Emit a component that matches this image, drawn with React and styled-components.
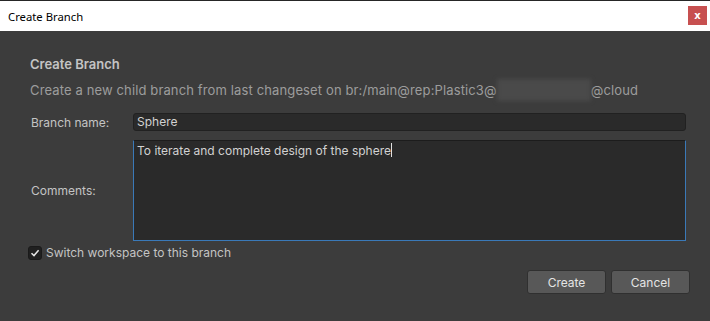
import React from 'react';
import styled, { createGlobalStyle } from 'styled-components';

const GlobalStyle = createGlobalStyle`
  html, body {
    margin: 0;
    padding: 0;
    background: #3c3c3c;
  }
  * { box-sizing: border-box; }
`;

// Window chrome
const Window = styled.div`
  width: 710px;
  height: 321px;
  display: flex;
  flex-direction: column;
  border-top: 1px solid #262626;
  background: #3c3c3c;
  font-family: Inter, "Noto Sans", sans-serif;
`;

const TitleBar = styled.div`
  height: 30px;
  background: #ffffff;
  display: flex;
  align-items: center;
  justify-content: space-between;
  padding: 0 3px 0 8px;
`;

const TitleText = styled.span`
  font-family: "Noto Sans", "Open Sans", sans-serif;
  font-size: 11.3px;
  color: #000;
`;

const CloseButton = styled.button`
  width: 19px;
  height: 19px;
  margin-top: -2px;
  border: none;
  padding: 0;
  background: #c75050;
  color: #fff;
  font-family: "DejaVu Sans", sans-serif;
  font-size: 10px;
  font-weight: bold;
  line-height: 19px;
  text-align: center;
`;

// Body
const Body = styled.div`
  flex: 1;
  display: flex;
  flex-direction: column;
  padding: 25px 20px 0 30px;
`;

const Heading = styled.h2`
  margin: 0;
  font-size: 13px;
  font-weight: 600;
  line-height: 16px;
  color: #c4c4c4;
`;

const Description = styled.p`
  margin: 7px 0 0;
  font-size: 13px;
  line-height: 16px;
  letter-spacing: 0.13px;
  color: #9c9c9c;
  display: flex;
  align-items: center;
  white-space: nowrap;
`;

const Blurred = styled.span`
  display: inline-block;
  width: 94px;
  height: 22px;
  background: #4a4a4a;
  filter: blur(2px);
`;

const Form = styled.div`
  margin-top: 12px;
  margin-right: 4px;
  display: grid;
  grid-template-columns: 103px 1fr;
  row-gap: 9px;
  align-items: center;
`;

const Label = styled.label`
  padding-left: 1px;
  font-size: 12px;
  color: #c4c4c4;
`;

const TextInput = styled.div`
  height: 18px;
  background: #2a2a2a;
  border: 1px solid #212121;
  border-radius: 3px;
  padding: 0 3px;
  font-size: 12px;
  line-height: 16px;
  color: #d2d2d2;
`;

const TextArea = styled.div`
  height: 101px;
  background: #2a2a2a;
  border: 1px solid #3a79b8;
  border-top-color: #1c1c1c;
  padding: 2px 3px;
  font-size: 12px;
  line-height: 16px;
  color: #d2d2d2;
`;

const Caret = styled.span`
  display: inline-block;
  width: 1px;
  height: 14px;
  background: #e0e0e0;
  vertical-align: -2px;
`;

const CheckRow = styled.label`
  margin-top: 4px;
  margin-left: -2px;
  display: flex;
  align-items: center;
  gap: 4px;
  font-size: 12px;
  color: #c4c4c4;
`;

const CheckBox = styled.span`
  width: 14px;
  height: 14px;
  border-radius: 3px;
  background: #202020;
  border: 1px solid #1a1a1a;
  display: flex;
  align-items: center;
  justify-content: center;
`;

const Actions = styled.div`
  margin-top: 10px;
  display: flex;
  justify-content: flex-end;
  gap: 5px;
`;

const Button = styled.button`
  width: 79px;
  height: 24px;
  background: #585858;
  border: 1px solid #303030;
  border-radius: 3px;
  color: #e4e4e4;
  font-family: Inter, "Noto Sans", sans-serif;
  font-size: 12px;
  padding: 0;
`;

const App = () => {
  return (
    <Window>
      <GlobalStyle />
      <TitleBar>
        <TitleText>Create Branch</TitleText>
        <CloseButton>x</CloseButton>
      </TitleBar>
      <Body>
        <Heading>Create Branch</Heading>
        <Description>
          Create a new child branch from last changeset on br:/main@rep:Plastic3@
          <Blurred />
          @cloud
        </Description>
        <Form>
          <Label>Branch name:</Label>
          <TextInput>Sphere</TextInput>
          <Label>Comments:</Label>
          <TextArea>
            To iterate and complete design of the sphere<Caret />
          </TextArea>
        </Form>
        <CheckRow>
          <CheckBox>
            <svg width="10" height="10" viewBox="0 0 10 10">
              <path d="M1.5 5.2 L4 7.6 L8.6 2.2" fill="none" stroke="#e6e6e6" strokeWidth="1.5" />
            </svg>
          </CheckBox>
          Switch workspace to this branch
        </CheckRow>
        <Actions>
          <Button>Create</Button>
          <Button>Cancel</Button>
        </Actions>
      </Body>
    </Window>
  );
};

export default App;
